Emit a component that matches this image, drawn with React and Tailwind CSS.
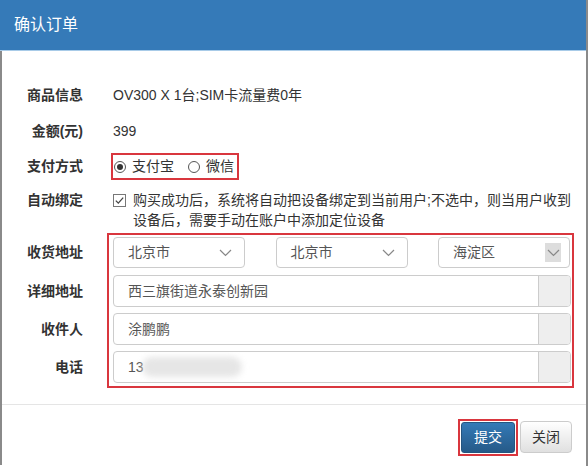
const font = { fontFamily: '"Liberation Sans", "Noto Sans CJK SC", sans-serif' };

function Chevron({ className = '' }) {
  return (
    <svg width="13" height="8" viewBox="0 0 13 8" className={className}>
      <path d="M1 1 L6.5 6.5 L12 1" fill="none" stroke="#888" strokeWidth="1.2" />
    </svg>
  );
}

function Select({ value, boxed }) {
  return (
    <div className="flex h-[31px] w-[132px] items-center justify-between rounded-[4px] border border-[#ccc] bg-white pl-[14px] pr-[8px] text-[#555]">
      <span>{value}</span>
      {boxed ? (
        <span className="flex h-[19px] w-[16px] items-center justify-center bg-[#ddd]">
          <Chevron />
        </span>
      ) : (
        <Chevron className="mr-[4px]" />
      )}
    </div>
  );
}

function Field({ children }) {
  return (
    <div className="flex h-[32px] overflow-hidden rounded-[4px] border border-[#ccc] bg-white">
      <div className="flex flex-1 items-center pl-[14px] text-[#555]">{children}</div>
      <div className="w-[32px] border-l border-[#ccc] bg-[#eee]" />
    </div>
  );
}

function Radio({ checked }) {
  return (
    <span className="flex h-[12px] w-[12px] items-center justify-center rounded-full border border-[#555] bg-white">
      {checked && <span className="h-[6px] w-[6px] rounded-full bg-[#333]" />}
    </span>
  );
}

export default function App() {
  return (
    <div className="h-[466px] w-[588px] overflow-hidden border-r-2 border-[#8a8a8a] bg-white text-[14px] text-[#333]" style={font}>
      <div className="flex h-[51px] items-center border-b border-[#a8cbe8] bg-[#357ab8] pl-[14px] text-[16px] text-white">
        确认订单
      </div>

      <div className="border-l-2 border-[#8a8a8a]">
        <div className="pt-[34px] pb-[16px]">
          <div className="flex h-[20px] items-center leading-[20px]">
            <div className="w-[81px] text-right font-bold">商品信息</div>
            <div className="ml-[30px]">OV300 X 1台;SIM卡流量费0年</div>
          </div>

          <div className="mt-[16px] flex h-[20px] items-center leading-[20px]">
            <div className="w-[81px] text-right font-bold">金额(元)</div>
            <div className="ml-[30px]">399</div>
          </div>

          <div className="mt-[12px] flex h-[27px] items-center">
            <div className="w-[81px] text-right font-bold">支付方式</div>
            <div className="ml-[28px] flex h-[27px] items-center border-2 border-[#d9363e] pl-[1px] pr-[3px]">
              <Radio checked />
              <span className="ml-[6px]">支付宝</span>
              <span className="ml-[14px]"><Radio /></span>
              <span className="ml-[6px]">微信</span>
            </div>
          </div>

          <div className="mt-[10px] flex leading-[20px]">
            <div className="w-[81px] text-right font-bold">自动绑定</div>
            <div className="ml-[30px] flex">
              <svg width="13" height="13" viewBox="0 0 13 13" className="mt-[4px] shrink-0">
                <rect x="0.5" y="0.5" width="12" height="12" fill="#fff" stroke="#777" />
                <path d="M2.8 6.6 L5.3 9.1 L10.2 3.6" fill="none" stroke="#444" strokeWidth="1.3" />
              </svg>
              <div className="ml-[7px]">
                购买成功后，系统将自动把设备绑定到当前用户;不选中，则当用户收到
                <br />
                设备后，需要手动在账户中添加定位设备
              </div>
            </div>
          </div>

          <div className="mt-[3px] flex">
            <div className="w-[81px] pt-[4px] text-right font-bold">
              <div className="flex h-[31px] items-center justify-end">收货地址</div>
              <div className="mt-[7px] flex h-[32px] items-center justify-end">详细地址</div>
              <div className="mt-[6px] flex h-[32px] items-center justify-end">收件人</div>
              <div className="mt-[6px] flex h-[32px] items-center justify-end">电话</div>
            </div>
            <div className="ml-[24px] w-[467px] border-2 border-[#d9363e] pt-[2px] pb-[3px] pl-[4px] pr-[1px]">
              <div className="flex justify-between pr-[1px]">
                <Select value="北京市" />
                <Select value="北京市" />
                <Select value="海淀区" boxed />
              </div>
              <div className="mt-[7px]">
                <Field>西三旗街道永泰创新园</Field>
              </div>
              <div className="mt-[6px]">
                <Field>涂鹏鹏</Field>
              </div>
              <div className="mt-[6px]">
                <Field>
                  <span>13</span>
                  <span className="ml-[-2px] h-[20px] w-[100px] rounded-full bg-[#e6e6e6] blur-[3px]" />
                </Field>
              </div>
            </div>
          </div>
        </div>

        <div className="flex h-[61px] items-start justify-end border-t border-[#e5e5e5] pt-[14px] pr-[14px]">
          <div className="border-2 border-[#d9363e] p-[1px]">
            <button className="h-[31px] w-[54px] rounded-[3px] border border-[#245580] bg-gradient-to-b from-[#337ab7] to-[#265a88] text-white">
              提交
            </button>
          </div>
          <button className="mt-[2px] ml-[2px] h-[32px] w-[52px] rounded-[4px] border border-[#ccc] bg-gradient-to-b from-white to-[#e0e0e0] text-[#333]">
            关闭
          </button>
        </div>
      </div>
    </div>
  );
}
